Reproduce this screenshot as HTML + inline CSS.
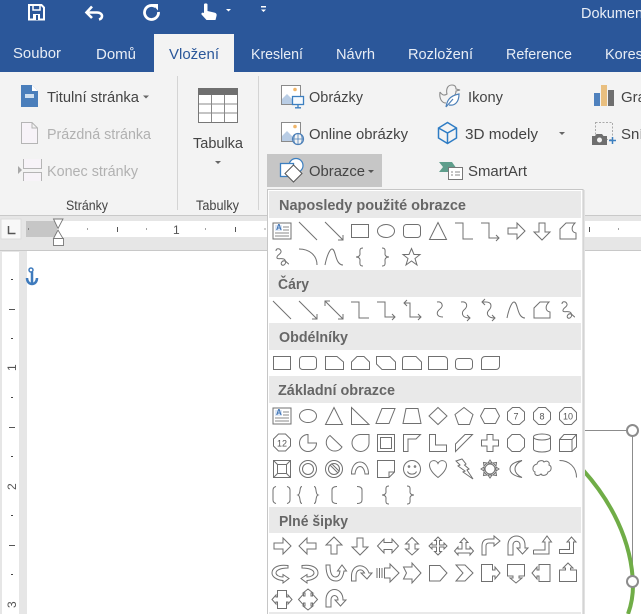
<!DOCTYPE html>
<html lang="cs"><head><meta charset="utf-8"><title>Vložení</title>
<style>
html,body{margin:0;padding:0;width:641px;height:614px;overflow:hidden;background:#fff}
svg{display:block}
text{font-family:"Liberation Sans",sans-serif;font-size:15px;fill:#444}
.tab{fill:#e8edf5}
.dis{fill:#b1b1b1}
.lbl{font-size:13.5px;fill:#444}
.hd{font-weight:bold;fill:#666;font-size:14.5px}
.rt{font-size:12px;fill:#555}
.n{font-size:9px;fill:#555;text-anchor:middle}
</style></head><body>
<svg width="641" height="614" viewBox="0 0 641 614" xmlns="http://www.w3.org/2000/svg">
<defs>
<g id="line"><path d="M-9-9L9 9"/></g>
<g id="arrow"><path d="M-9-9L9 9M9 4V9H4"/></g>
<g id="darrow"><path d="M-9-9L9 9M9 4V9H4M-9-4V-9H-4"/></g>
<g id="elbow"><path d="M-9-8H-1V8H9"/></g>
<g id="elbowa"><path d="M-9-8H-1V7H9M6 4L9 7L6 10"/></g>
<g id="elbowd"><path d="M-8-7H-2V7H9M-5-10L-8-7L-5-4M6 4L9 7L6 10"/></g>
<g id="ffree"><path d="M-8 8V-2L-2-8H7C3-4 3 1 8 2V8Z"/></g>
<g id="scrib"><path d="M-6-6C-6-9-2-9-1-6C0-3-6-2-5 1C-4 3 1 0 3 3C5 6 2 9 0 8C-2 7 0 3 3 4C5 5 6 7 7 7"/></g>
<g id="curve"><path d="M-9 8C-7-2-4-8-2-8C2-8 1 8 9 8"/></g>
<g id="arc"><path d="M-9-8C1-8 9-2 9 8"/></g>
<g id="lb"><path d="M4-9C0-9 1-6 1-3C1 0-3 0-3 0C-3 0 1 0 1 3C1 6 0 9 4 9"/></g>
<g id="rb"><path d="M-4-9C0-9-1-6-1-3C-1 0 3 0 3 0C3 0-1 0-1 3C-1 6 0 9-4 9"/></g>
<g id="ar"><path d="M-8-3H1V-8L9 0L1 8V3H-8Z"/></g>
<g id="tb"><rect x="-9" y="-8" width="18" height="16" fill="#fff"/><rect x="-7" y="-6" width="7" height="6" fill="#dde7f5" stroke="none"/><path d="M1-4H7M1-1H7M-7 2H7M-7 5H7" stroke="#8a8a8a"/><text x="-6" y="-1" style="font-size:8px;font-weight:bold;fill:#3f74b5;stroke:none">A</text></g>
<g id="curveR"><path d="M288 565.500C276 564 272 569 272 573C272 577 277 580 283 580.500V583L289 578.500L283 574.500V577C279 577 276 575 276 573C276 570 281 568 288 568Z"/></g>
</defs>

<!-- background -->
<rect width="641" height="614" fill="#e6e6e6"/>
<rect width="641" height="72" fill="#2b579a"/>
<rect x="0" y="72" width="641" height="143" fill="#f3f3f3"/>
<rect x="154" y="34" width="80" height="38" fill="#f3f3f3"/>
<rect x="0" y="215" width="641" height="1" fill="#c9c9c9"/>

<!-- quick access -->
<g fill="none" stroke="#fff">
<path d="M29 5H41.500L44 7.500V19.500H29Z" stroke-width="2"/>
<path d="M33 5V10H40V5" stroke-width="1.500"/>
<rect x="33" y="14" width="7" height="6" fill="#fff" stroke="none"/>
<rect x="36" y="15" width="2" height="5" fill="#2b579a" stroke="none"/>
<path d="M87 12.500H97C100.500 12.500 102 14.500 102 16C102 17.500 101 19 99 19.500" stroke-width="2.600"/>
<path d="M92 6.500L86.500 12.500L92 18" stroke-width="2.600"/>
<path d="M155.500 6.700A7 7 0 1 0 158.500 12" stroke-width="2.800"/>
<path d="M152 4H158V10.500Z" fill="#fff" stroke="none"/>
</g>
<path d="M204 4.500C204 3 207.500 3 207.500 4.500V11L214 12.500C216.500 13 217 14.500 216.500 16L215.500 20H206.500L201.500 14.500C201 13 202.500 12 204 13Z" fill="#fff"/>
<path d="M226 9H231L228.500 11.500Z M261 9.500H266L263.500 12Z" fill="#fff"/>
<rect x="261" y="6" width="5" height="1.500" fill="#fff"/>
<text x="581" y="18" style="fill:#e9eef6;font-size:14.500px">Dokument</text>

<!-- tabs -->
<text class="tab" x="13" y="58" textLength="48" lengthAdjust="spacingAndGlyphs">Soubor</text>
<text class="tab" x="96" y="59" textLength="40" lengthAdjust="spacingAndGlyphs">Domů</text>
<text x="169" y="59" textLength="50" lengthAdjust="spacingAndGlyphs" style="fill:#2b579a">Vložení</text>
<text class="tab" x="251" y="59" textLength="52" lengthAdjust="spacingAndGlyphs">Kreslení</text>
<text class="tab" x="336" y="59" textLength="39" lengthAdjust="spacingAndGlyphs">Návrh</text>
<text class="tab" x="408" y="59" textLength="65" lengthAdjust="spacingAndGlyphs">Rozložení</text>
<text class="tab" x="506" y="59" textLength="66" lengthAdjust="spacingAndGlyphs">Reference</text>
<text class="tab" x="605" y="59" style="font-size:14.500px">Korespondence</text>

<!-- ribbon separators -->
<path d="M177.500 76V210M258.500 76V210" stroke="#d4d4d4"/>

<!-- Stránky -->
<path d="M21 85H32L38 91V107H21Z" fill="#4a7ebb"/><path d="M32 85V91H38Z" fill="#fff"/><rect x="25" y="94" width="9" height="4" fill="#cfdff0"/>
<text x="47" y="102" textLength="92" lengthAdjust="spacingAndGlyphs">Titulní stránka</text>
<path d="M143 95.500H149L146 98.500Z" fill="#666"/>
<path d="M21.500 122.500H32L37.500 128V143.500H21.500Z M32 122.500V128H37.500" fill="#f7f3f8" stroke="#b5b5b5"/>
<text class="dis" x="47" y="139" textLength="104" lengthAdjust="spacingAndGlyphs">Prázdná stránka</text>
<path d="M18 166V174L22 170Z" fill="#a8a8a8"/>
<path d="M23.500 159V168.500H41.500V159" fill="#f7f3f8" stroke="#b5b5b5"/>
<path d="M23.500 181V172.500H41.500V181" fill="#f7f3f8" stroke="#b5b5b5"/>
<text class="dis" x="47" y="176" textLength="91" lengthAdjust="spacingAndGlyphs">Konec stránky</text>
<text class="lbl" x="66" y="210" textLength="42" lengthAdjust="spacingAndGlyphs">Stránky</text>

<!-- Tabulka -->
<rect x="198" y="88" width="40" height="7" fill="#6f6f6f"/>
<path d="M198.500 95V122.500H237.500V95M198 104H238M198 113H238M211.500 95V122M224.500 95V122" fill="#fff" stroke="#8a8a8a"/>
<path d="M198.500 95V122.500H237.500V95" fill="none" stroke="#777"/>
<text x="193" y="148" textLength="50" lengthAdjust="spacingAndGlyphs">Tabulka</text>
<path d="M215 161H221L218 164Z" fill="#666"/>
<text class="lbl" x="196" y="210" textLength="43" lengthAdjust="spacingAndGlyphs">Tabulky</text>

<!-- Obrázky -->
<rect x="267" y="154" width="115" height="33" fill="#c6c6c6"/>
<rect x="281.500" y="85.500" width="19" height="19" fill="#fff" stroke="#8a8a8a"/>
<path d="M282 104V99L287 94L292 99V104Z" fill="#b9cde5"/><circle cx="295" cy="89.500" r="1.800" fill="#f0b569"/>
<rect x="292.500" y="96.500" width="11" height="8" fill="#f5f9fd" stroke="#3c7fc0" stroke-width="1.300"/><path d="M298 105V107.500M295 107.800H301" stroke="#3c7fc0" stroke-width="1.300"/>
<rect x="281.500" y="122.500" width="19" height="19" fill="#fff" stroke="#8a8a8a"/>
<path d="M282 141V136L287 131L292 136V141Z" fill="#b9cde5"/><circle cx="295" cy="126.500" r="1.800" fill="#f0b569"/>
<circle cx="298" cy="139" r="5.500" fill="#f3f3f3" stroke="#4d80b8" stroke-width="1.200"/><path d="M292.500 139H303.500M298 133.500V144.500M295 134.500C293.500 137 293.500 141 295 143.500M301 134.500C302.500 137 302.500 141 301 143.500" fill="none" stroke="#4d80b8" stroke-width=".8"/>
<!-- Obrazce icon -->
<circle cx="296" cy="165.500" r="7" fill="#fff" stroke="#3c7fc0" stroke-width="1.200"/>
<rect x="280.500" y="163.500" width="13" height="13" fill="#fff" stroke="#3c7fc0" stroke-width="1.300"/>
<path d="M293.500 165L302 173.500L293.500 182L285 173.500Z" fill="#fff" stroke="#555"/>
<text x="309" y="102" textLength="54" lengthAdjust="spacingAndGlyphs">Obrázky</text>
<text x="309" y="139" textLength="99" lengthAdjust="spacingAndGlyphs">Online obrázky</text>
<text x="309" y="176" textLength="56" lengthAdjust="spacingAndGlyphs">Obrazce</text>
<path d="M368 170H374L371 173Z" fill="#555"/>

<!-- Ikony -->
<path d="M440 92C442 95 444 96 447 94C446 90 447 85 452 85C455 85 456 87 456 89L460 90L456 91C456 94 455 95 454 96M440 92C439 99 442 103 446 103" fill="none" stroke="#8a8a8a" stroke-width="1.100"/>
<path d="M446 107C447 101 449 96 459 94C459 102 455 106 449 105M446 107L453 99" fill="#fff" stroke="#4d80b8" stroke-width="1.200"/>
<text x="468" y="102" textLength="35" lengthAdjust="spacingAndGlyphs">Ikony</text>
<path d="M447.500 122.500L456.500 128V138L447.500 143.500L438.500 138V128ZM438.500 128L447.500 133L456.500 128M447.500 133V143.500" fill="none" stroke="#2e7cc4" stroke-width="1.500"/>
<text x="465" y="139" textLength="73" lengthAdjust="spacingAndGlyphs">3D modely</text>
<path d="M559 132H565L562 135Z" fill="#666"/>
<path d="M439 162H452L459 172H439L443 167Z" fill="#5f9e8c"/>
<rect x="448.500" y="167.500" width="14" height="12" fill="#fff" stroke="#777"/><path d="M451 172H453M455 172H460M451 175H453M455 175H460" stroke="#888"/>
<text x="468" y="176" textLength="59" lengthAdjust="spacingAndGlyphs">SmartArt</text>

<!-- Graf / Snímek -->
<rect x="594" y="93" width="6" height="13" fill="#4f81bd"/><rect x="601" y="85" width="6" height="21" fill="#e9bf7f"/><rect x="608" y="90" width="6" height="16" fill="#6e6e6e"/>
<text x="621" y="102">Grafy</text>
<rect x="595.500" y="122.500" width="17" height="17" fill="none" stroke="#aaa" stroke-dasharray="2 1.500"/>
<path d="M592 136H595L596.500 134H602L603.500 136H607V145H592Z" fill="#6e6e6e"/><circle cx="599.500" cy="140" r="2.500" fill="#f3f3f3"/>
<path d="M609 140.500H616M612.500 137V144" stroke="#3c7fc0" stroke-width="1.500"/>
<text x="621" y="139">Snímek</text>

<!-- horizontal ruler -->
<rect x="1" y="219" width="20" height="20" fill="#f8f8f8" stroke="#dcdcdc"/>
<path d="M8.500 226V233.500H15.500" fill="none" stroke="#555" stroke-width="1.500"/>
<rect x="26" y="221" width="615" height="16" fill="#fff"/>
<rect x="26" y="221" width="31" height="16" fill="#c6c6c6"/>
<path d="M28 228.500h1v1h-1zM87 228.500h1v1h-1zM146 228.500h1v1h-1zM205 228.500h1v1h-1zM264.500 228.500h1v1h-1zM618 228.500h1v1h-1z" fill="#444"/>
<path d="M117.500 227V232M235.500 227V232M589.500 227V232" stroke="#555"/>
<text class="rt" x="173" y="234">1</text>
<path d="M53.500 219H63L58 228.500ZM53.500 238.500L58 230L63 238.500Z" fill="#fff" stroke="#777" stroke-width=".9"/>
<rect x="53.500" y="238.500" width="10" height="7" fill="#fff" stroke="#777" stroke-width=".9"/>

<!-- document -->
<rect x="0" y="250" width="641" height="1" fill="#c8c8c8"/>
<rect x="2" y="252" width="17" height="362" fill="#fff"/>
<rect x="27" y="251" width="614" height="363" fill="#fff"/>
<path d="M11 279h2v1h-2zM11 338h2v1h-2zM11 397h2v1h-2zM11 456h2v1h-2zM11 515h2v1h-2zM11 574h2v1h-2z" fill="#444"/>
<path d="M9 309.500H15M9 427.500H15M9 545.500H15" stroke="#555"/>
<text class="rt" transform="translate(16,368) rotate(-90) translate(-3,0)">1</text>
<text class="rt" transform="translate(16,487) rotate(-90) translate(-3,0)">2</text>
<text class="rt" transform="translate(16,605) rotate(-90) translate(-3,0)">3</text>
<!-- anchor -->
<path d="M32 272V283M27 278C27 286 37 286 37 278" fill="none" stroke="#3f7bbd" stroke-width="2.500"/><circle cx="31" cy="270" r="2" fill="none" stroke="#3f7bbd" stroke-width="1.500"/>

<!-- shape on page -->
<path d="M583 430.500H632.500V581" fill="none" stroke="#8c8c8c"/>
<path d="M583 470C610 500 632 540 633 585C633 597 631 606 628 614" fill="none" stroke="#70ad47" stroke-width="4"/>
<circle cx="632.500" cy="430.500" r="5.500" fill="#fff" stroke="#8c8c8c" stroke-width="2"/>
<circle cx="632.500" cy="581.500" r="5.500" fill="#fff" stroke="#8c8c8c" stroke-width="2"/>

<!-- panel -->
<rect x="583" y="190" width="2" height="424" fill="#e2e2e2"/>
<rect x="267.500" y="189.500" width="315.500" height="430" fill="#fff" stroke="#c6c6c6"/>
<rect x="269" y="191" width="312" height="27" fill="#e9e9e9"/>
<rect x="269" y="270" width="312" height="27" fill="#e9e9e9"/>
<rect x="269" y="323" width="312" height="27" fill="#e9e9e9"/>
<rect x="269" y="376" width="312" height="27" fill="#e9e9e9"/>
<rect x="269" y="507" width="312" height="26" fill="#e9e9e9"/>
<rect x="269" y="612" width="312" height="2" fill="#e9e9e9"/>
<text class="hd" x="279" y="210" textLength="187" lengthAdjust="spacingAndGlyphs">Naposledy použité obrazce</text>
<text class="hd" x="278" y="289" textLength="31" lengthAdjust="spacingAndGlyphs">Čáry</text>
<text class="hd" x="279" y="342" textLength="69" lengthAdjust="spacingAndGlyphs">Obdélníky</text>
<text class="hd" x="278" y="395" textLength="117" lengthAdjust="spacingAndGlyphs">Základní obrazce</text>
<text class="hd" x="279" y="526" textLength="69" lengthAdjust="spacingAndGlyphs">Plné šipky</text>

<g fill="none" stroke="#707070" stroke-width="1">
<!-- recent row 1 -->
<use href="#tb" x="282" y="231"/>
<use href="#line" x="308" y="231"/>
<use href="#arrow" x="334" y="231"/>
<rect x="351.500" y="224.500" width="17" height="13"/>
<ellipse cx="386" cy="231" rx="8.500" ry="6.500"/>
<rect x="403.500" y="224.500" width="17" height="13" rx="3"/>
<path d="M438 222.500L446.500 239.500H429.500Z"/>
<use href="#elbow" x="464" y="231"/>
<use href="#elbowa" x="490" y="231"/>
<use href="#ar" x="516" y="231"/>
<use href="#ar" transform="translate(542,231) rotate(90)"/>
<use href="#ffree" x="568" y="231"/>
<!-- recent row 2 -->
<use href="#scrib" x="282" y="257"/>
<use href="#arc" x="308" y="257"/>
<use href="#curve" x="334" y="257"/>
<use href="#lb" x="359" y="257"/>
<use href="#rb" x="386" y="257"/>
<path d="M411.500 248.500L414 254.500H420L415 258.500L417 265L411.500 261L406 265L408 258.500L403 254.500H409Z"/>
<!-- Čáry -->
<use href="#line" x="282" y="310"/>
<use href="#arrow" x="308" y="310"/>
<use href="#darrow" x="334" y="310"/>
<use href="#elbow" x="360" y="310"/>
<use href="#elbowa" x="386" y="310"/>
<use href="#elbowd" x="412" y="310"/>
<path d="M437 302C442 301 444 306 440 309C436 312 436 317 443 317"/>
<path d="M461 302C467 301 468 306 465 309C461 312 461 318 470 318M467 315L470 318L467 321"/>
<path d="M482 302H486C492 302 492 307 489 310C486 313 487 318 495 318M485 299L482 302L485 305M492 315L495 318L492 321"/>
<use href="#curve" x="516" y="310"/>
<use href="#ffree" x="542" y="310"/>
<use href="#scrib" x="568" y="310"/>
<!-- Obdélníky -->
<rect x="273.500" y="356.500" width="17" height="13"/>
<rect x="299.500" y="356.500" width="17" height="13" rx="3"/>
<path d="M325.500 356.500H337L343.500 362V369.500H325.500Z"/>
<path d="M351.500 369.500V362L357 356.500H364L369.500 362V369.500Z"/>
<path d="M376.500 356.500H390L395.500 362V369.500H382L376.500 364Z"/>
<path d="M402.500 369.500V359C402.500 357 404 356.500 405 356.500H416L421.500 362V369.500Z"/>
<path d="M428.500 356.500H444C446 356.500 447.500 358 447.500 360V369.500H428.500Z"/>
<rect x="455.500" y="358.500" width="17" height="11" rx="3"/>
<path d="M481.500 369.500V360C481.500 358 483 356.500 485 356.500H499.500V366C499.500 368 498 369.500 496 369.500Z"/>
<!-- Základní 1 -->
<use href="#tb" x="282" y="416"/>
<ellipse cx="308" cy="416" rx="8.500" ry="6.500"/>
<path d="M334 407.500L342.500 424.500H325.500Z"/>
<path d="M351.500 407.500L369 424.500H351.500Z"/>
<path d="M382 408.500H395L389 423.500H376Z"/>
<path d="M406 408.500H418L421 423.500H403Z"/>
<path d="M438 407.500L447 416L438 424.500L429 416Z"/>
<path d="M464 407.500L473 414.500L469.500 424.500H458.500L455 414.500Z"/>
<path d="M484.500 408.500H495.500L499.500 416L495.500 423.500H484.500L480.500 416Z"/>
<path d="M512.500 407.500H519.500L524.500 412V420L519.500 424.500H512.500L507.500 420V412Z"/>
<path d="M538.500 407.500H545.500L550.500 412.500V419.500L545.500 424.500H538.500L533.500 419.500V412.500Z"/>
<path d="M564.500 407.500H571.500L576.500 412.500V419.500L571.500 424.500H564.500L559.500 419.500V412.500Z"/>
<!-- Základní 2 -->
<path d="M278.500 434H285.500L290.500 439V446L285.500 451H278.500L273.500 446V439Z"/>
<path d="M308 434.500A8.500 8.500 0 1 0 316.500 443H308Z"/>
<path d="M330 435.500A8.500 8.500 0 1 0 342 447Z"/>
<path d="M369 434.500H360A8.500 8.500 0 1 0 369 443Z"/>
<rect x="377.500" y="434.500" width="17" height="17"/><rect x="380.500" y="437.500" width="11" height="11"/>
<path d="M403.500 451.500V434.500H420.500L416 439H408V451.500Z"/>
<path d="M429.500 434.500H435.500V445H446.500V451.500H429.500Z"/>
<path d="M455.500 451.500V444L465 434.500H472.500L455.500 451.500Z"/>
<path d="M487 434.500H493V440H498.500V446H493V451.500H487V446H481.500V440H487Z"/>
<path d="M512 434.500H520L524.500 439V447L520 451.500H512L507.500 447V439Z"/>
<path d="M533.500 437V449C533.500 453 550.500 453 550.500 449V437C550.500 433 533.500 433 533.500 437C533.500 441 550.500 441 550.500 437"/>
<path d="M559.500 439.500L564 434.500H576.500V447L572 451.500H559.500ZM559.500 439.500H572V451.500M572 439.500L576.500 434.500"/>
<!-- Základní 3 -->
<rect x="273.500" y="460.500" width="17" height="17"/><rect x="277.500" y="464.500" width="9" height="9"/><path d="M273.500 460.500L277.500 464.500M290.500 460.500L286.500 464.500M273.500 477.500L277.500 473.500M290.500 477.500L286.500 473.500"/>
<circle cx="308" cy="469" r="8.500"/><circle cx="308" cy="469" r="5.500"/>
<circle cx="334" cy="469" r="8.500"/><circle cx="334" cy="469" r="5.500"/><path d="M330 465L338 473M331.500 463.500L339.500 471.500"/>
<path d="M351.500 474C351.500 458 368.500 458 368.500 474H365C364 464 356 464 355 474Z"/>
<path d="M377.500 460.500H394.500V472L389 477.500H377.500ZM389 477.500V472H394.500"/>
<circle cx="412" cy="469" r="8.500"/><circle cx="409" cy="466.500" r=".8"/><circle cx="415" cy="466.500" r=".8"/><path d="M407.500 471.500C409 475 415 475 416.500 471.500"/>
<path d="M438 477.500C431 472 429.500 468 429.500 465C429.500 460 436 459 438 463.500C440 459 446.500 460 446.500 465C446.500 468 445 472 438 477.500Z"/>
<path d="M456 461L462 459L466 464L464.500 465L469 469L467 470L473 479L463 472L465 471L458 466L460 465Z"/>
<circle cx="490" cy="469" r="5"/><path d="M490 460L488 463H492ZM490 478L488 475H492ZM481 469L484 467V471ZM499 469L496 467V471ZM483.500 462.500L487 463L484 466ZM496.500 462.500L493 463L496 466ZM483.500 475.500L487 475L484 472ZM496.500 475.500L493 475L496 472Z"/>
<path d="M522 460.500C514 462 510 465 510 469C510 473 514 476 522 477.500C517 475 515 472 515 469C515 466 517 463 522 460.500Z"/>
<path d="M537 464C538 460 543 460 544 462C547 460 550 462 549 465C552 466 552 471 548 472C547 476 542 476 541 474C538 477 534 475 535 472C532 471 532 465 537 464Z"/>
<path d="M559.500 460.500C569 460.500 576.500 467 576.500 477.500"/>
<!-- Základní 4 -->
<path d="M276 486.500C274 487 273 488 273 490V500C273 502 274 503 276 503.500M287 486.500C289 487 290 488 290 490V500C290 502 289 503 287 503.500"/>
<path d="M302 486.500C299 486.500 301 494 298 495C301 496 299 503.500 302 503.500M314 486.500C317 486.500 315 494 318 495C315 496 317 503.500 314 503.500"/>
<path d="M337 486.500C333 486.500 332 488 332 490V500C332 502 333 503.500 337 503.500"/>
<path d="M357 486.500C361 486.500 362 488 362 490V500C362 502 361 503.500 357 503.500"/>
<use href="#lb" x="385" y="495"/>
<use href="#rb" x="411" y="495"/>
<!-- Šipky 1 -->
<use href="#ar" x="282" y="546"/>
<use href="#ar" transform="translate(308,546) rotate(180)"/>
<use href="#ar" transform="translate(334,546) rotate(-90)"/>
<use href="#ar" transform="translate(360,546) rotate(90)"/>
<path d="M377.500 546L384 539V542.500H392V539L398.500 546L392 553V549.500H384V553Z"/>
<path d="M412 537.500L418.500 544H415V549H418.500L412 555L405.500 549H409V544H405.500Z"/>
<path d="M438 537L441.500 540.500H439.500V545H444V543L447 546L444 549V547H439.500V551.500H441.500L438 555L434.500 551.500H436.500V547H432V549L429 546L432 543V545H436.500V540.500H434.500Z"/>
<path d="M464 538L468 542.500H466V549H470V547L473.500 551L470 555V553H458V555L454.500 551L458 547V549H462V542.500H460Z"/>
<path d="M482 555V546C482 541 485 539 489 539H494V536L500 541L494 546V543H489C487 543 486 544 486 546V555Z"/>
<path d="M508 555V545C508 533 525 533 525 545V548H528L522.500 554L517 548H520V545C520 540 513 540 513 545V555Z"/>
<path d="M533.500 550H545V542H542.500L547 536L551.500 542H549V554H533.500V550"/>
<path d="M559.500 549.500H569.500V542H567L571.500 537L576 542H573.500V553.500H559.500Z"/>
<!-- Šipky 2 -->
<use href="#curveR"/>
<g transform="translate(590,0) scale(-1,1)"><use href="#curveR"/></g>
<path d="M326 565C326 575 329 581 336 581C341 581 343 577 344 571H346.500L342 565L337.500 571H340C339.500 575 338 577 335.500 577C332 577 330 573 330 565Z"/>
<path d="M351.500 581V576C351.500 564 365 562 369 573H372L367 579L361 573H364.500C362 568 356 569 356 576V581Z"/>
<path d="M377 568V578M379.500 568V578M382 568V578M384.500 568H390V564L399 573L390 582V578H384.500Z"/>
<path d="M403.500 567H412V563L421 573L412 583V579H403.500L406.500 573Z"/>
<path d="M429.500 565.500H440L447 573L440 581H429.500Z"/>
<path d="M456 565H465L473 573L465 581H456L463 573Z"/>
<path d="M481.500 564.500H492.500V570H495V567L500 573L495 579V576H492.500V581.500H481.500Z"/>
<path d="M507.500 564.500H524.500V576H519V578H522L516 583L510 578H513V576H507.500Z"/>
<path d="M550 564.500H539V570H537V567L532 573L537 579V576H539V581.500H550Z"/>
<path d="M559.500 581.500V570H565.500V568H563L568 563L573 568H570.500V570H576.500V581.500Z"/>
<!-- Šipky 3 -->
<path d="M277.500 590.500H286.500V597H288V595L292 599.500L288 604V602H286.500V608.500H277.500V602H276V604L272 599.500L276 595V597H277.500Z"/>
<path d="M305 593H303L308 589L313 593H311V596H312.500V594L317.500 599.500L312.500 605V603H311V606H313L308 610L303 606H305V603H303.500V605L298.500 599.500L303.500 594V596H305Z"/>
<path d="M326 607V600C326 586 343 586 343 600H346L340.500 606L335 600H338C338 594 331 594 331 600V607Z"/>
</g>
<g>
<text class="n" x="516" y="419.500">7</text>
<text class="n" x="542" y="419.500">8</text>
<text class="n" x="568" y="419.500">10</text>
<text class="n" x="282" y="446.500">12</text>
</g>
</svg>
</body></html>
